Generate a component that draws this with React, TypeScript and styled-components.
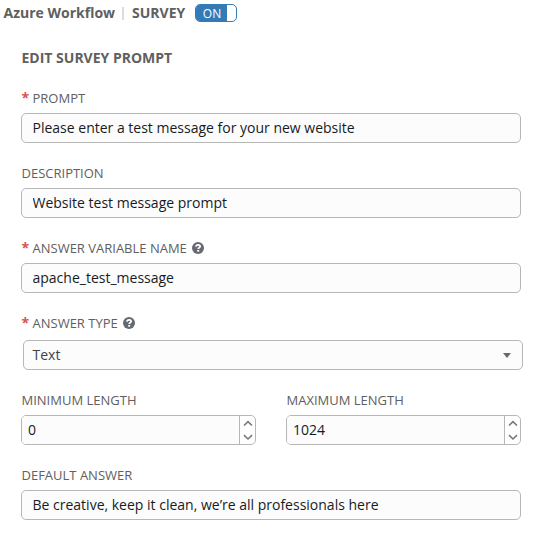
import React from "react";
import styled, { createGlobalStyle } from "styled-components";

const GlobalStyle = createGlobalStyle`
  * { box-sizing: border-box; }
  body {
    margin: 0;
    background: #fff;
    color: #161b1f;
    font: 14px/20px "Open Sans", "Noto Sans", sans-serif;
  }
`;

const Page = styled.main`
  width: 539px;
  height: 549px;
  overflow: hidden;
`;

const Header = styled.header`
  display: flex;
  align-items: center;
  height: 26px;
  padding-left: 3.5px;
  color: #606060;
  font-size: 14px;
  font-weight: 700;
  white-space: nowrap;
`;

const WorkflowName = styled.span`
  width: 111.5px;
`;

const Divider = styled.span`
  width: 2px;
  height: 13px;
  margin: 0 8px 0 7px;
  background: #dcdcdc;
`;

const SectionName = styled.span`
  width: 63px;
`;

const Toggle = styled.button`
  display: flex;
  width: 42px;
  height: 18px;
  padding: 0;
  overflow: hidden;
  border: 1px solid #337ab7;
  border-radius: 5px;
  background: #fff;
`;

const ToggleState = styled.span`
  width: 31px;
  height: 16px;
  padding-left: 1px;
  background: #337ab7;
  color: #fff;
  font: 12px/18px "Open Sans", sans-serif;
  text-align: center;
`;

const Form = styled.form`
  width: 500px;
  margin-left: 21px;
  padding-top: 22px;
`;

const FormTitle = styled.h1`
  height: 20px;
  margin: 0 0 15px;
  padding-left: 0.5px;
  color: #606060;
  font-size: 14px;
  line-height: 20px;
  font-weight: 700;
`;

const Field = styled.div<{ $height?: number }>`
  height: ${({ $height = 75 }) => $height}px;
  padding-top: 5px;
`;

const Label = styled.label<{ $space?: number }>`
  display: flex;
  align-items: center;
  height: 20px;
  margin-bottom: ${({ $space = 5 }) => $space}px;
  padding-left: 0.5px;
  color: #606060;
  font-size: 13px;
  line-height: 20px;
  white-space: nowrap;
`;

const Required = styled.span`
  width: 11px;
  color: #d9534f;
  font-size: 14px;
  font-weight: 700;
`;

const Help = styled.svg`
  width: 12px;
  height: 12px;
  margin-left: 5.5px;
`;

const Input = styled.input`
  display: block;
  width: 100%;
  height: 30px;
  padding: 0 10.5px 2px;
  border: 1px solid #b7b7b7;
  border-radius: 5px;
  outline: none;
  background: #fcfcfc;
  color: #161b1f;
  font: 14px/20px "Open Sans", sans-serif;
`;

const Select = styled.div`
  display: flex;
  align-items: center;
  justify-content: space-between;
  width: 500px;
  height: 30px;
  margin-left: 2px;
  padding: 0 11px 0 8.5px;
  border: 1px solid #b7b7b7;
  border-radius: 5px;
  background: #fcfcfc;
  color: #3e4349;
`;

const Caret = styled.svg`
  width: 8px;
  height: 5px;
`;

const Pair = styled.div`
  display: grid;
  grid-template-columns: 235px 235px;
  column-gap: 30px;
`;

const NumberBox = styled.div`
  display: flex;
  width: 235px;
  height: 30px;
  overflow: hidden;
  border: 1px solid #b7b7b7;
  border-radius: 5px;
  background: #fff;
`;

const NumberInput = styled.input`
  width: 217px;
  height: 28px;
  padding: 0 6px 2px;
  border: 0;
  outline: none;
  background: #fcfcfc;
  color: #161b1f;
  font: 14px/20px "Open Sans", sans-serif;
`;

const Stepper = styled.svg`
  width: 16px;
  height: 28px;
  border-left: 1px solid #b7b7b7;
`;

function HelpIcon() {
  return (
    <Help viewBox="0 0 12 12" aria-label="Help">
      <circle cx="6" cy="6" r="6" fill="#646972" />
      <path d="M3.9 4.7C4.1 3.3 5 2.8 6.1 2.8c1.2 0 2 .6 2 1.6 0 1.4-1.9 1.3-1.9 2.7" fill="none" stroke="#fff" strokeWidth="1.8" />
      <path d="M5.2 8h2v1.7h-2z" fill="#fff" />
    </Help>
  );
}

function TextField({ label, value, required, help }: {
  label: string; value: string; required?: boolean; help?: boolean;
}) {
  return (
    <Field>
      <Label>{required && <Required>*</Required>}{label}{help && <HelpIcon />}</Label>
      <Input aria-label={label} defaultValue={value} />
    </Field>
  );
}

function NumberField({ label, value }: { label: string; value: string }) {
  return (
    <Field>
      <Label>{label}</Label>
      <NumberBox>
        <NumberInput aria-label={label} defaultValue={value} />
        <Stepper viewBox="0 0 15 28" fill="none" stroke="#737982" strokeWidth="1.6">
          <path d="M4 9.5 8 5.7 12 9.5M4 19.2 8 23 12 19.2" />
        </Stepper>
      </NumberBox>
    </Field>
  );
}

export default function App() {
  return (
    <>
      <GlobalStyle />
      <Page>
        <Header>
          <WorkflowName>Azure Workflow</WorkflowName>
          <Divider />
          <SectionName>SURVEY</SectionName>
          <Toggle aria-label="Survey on"><ToggleState>ON</ToggleState></Toggle>
        </Header>
        <Form>
          <FormTitle>EDIT SURVEY PROMPT</FormTitle>
          <TextField label="PROMPT" value="Please enter a test message for your new website" required />
          <TextField label="DESCRIPTION" value="Website test message prompt" />
          <TextField label="ANSWER VARIABLE NAME" value="apache_test_message" required help />
          <Field $height={77}>
            <Label $space={7}><Required>*</Required>ANSWER TYPE<HelpIcon /></Label>
            <Select>Text<Caret viewBox="0 0 8 5"><path d="M0 0h8L4 5Z" fill="#646972" /></Caret></Select>
          </Field>
          <Pair>
            <NumberField label="MINIMUM LENGTH" value="0" />
            <NumberField label="MAXIMUM LENGTH" value="1024" />
          </Pair>
          <TextField label="DEFAULT ANSWER" value="Be creative, keep it clean, we’re all professionals here" />
        </Form>
      </Page>
    </>
  );
}
